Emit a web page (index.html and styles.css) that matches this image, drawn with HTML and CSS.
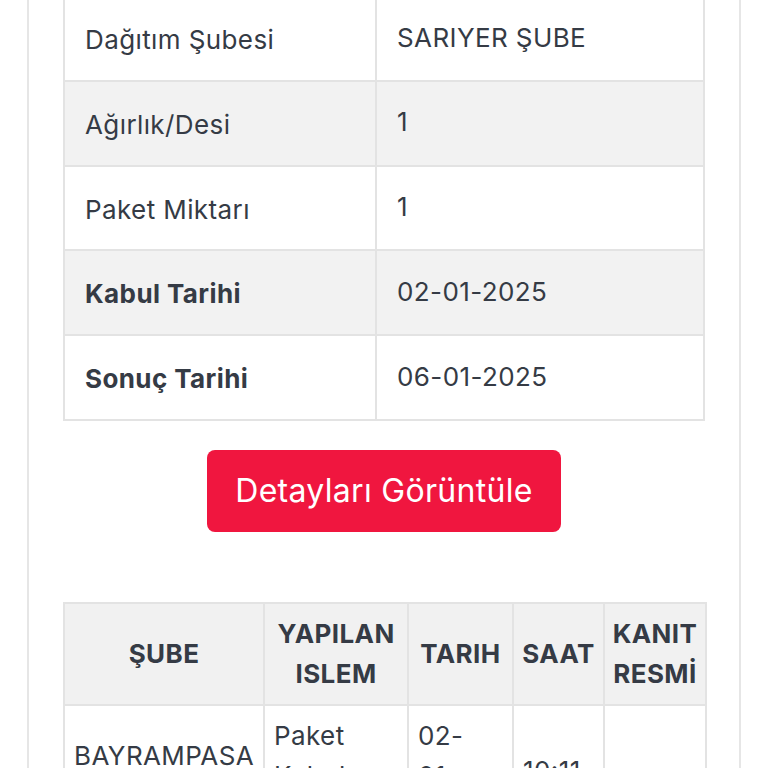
FILE: index.html
```html
<!DOCTYPE html>
<html lang="tr">
<head>
<meta charset="utf-8">
<title>Kargo Takip</title>
<link rel="stylesheet" href="styles.css">
</head>
<body>
<div class="card">
  <table class="info">
    <colgroup><col class="c-label"><col class="c-value"></colgroup>
    <tbody>
      <tr><td class="label">Dağıtım Şubesi</td><td class="value">SARIYER ŞUBE</td></tr>
      <tr class="alt"><td class="label">Ağırlık/Desi</td><td class="value">1</td></tr>
      <tr><td class="label">Paket Miktarı</td><td class="value">1</td></tr>
      <tr class="alt"><th class="label">Kabul Tarihi</th><td class="value">02-01-2025</td></tr>
      <tr><th class="label">Sonuç Tarihi</th><td class="value">06-01-2025</td></tr>
    </tbody>
  </table>

  <div class="actions">
    <button class="btn-detail" type="button">Detayları Görüntüle</button>
  </div>

  <table class="moves">
    <colgroup>
      <col class="m1"><col class="m2"><col class="m3"><col class="m4"><col class="m5">
    </colgroup>
    <thead>
      <tr>
        <th>ŞUBE</th>
        <th>YAPILAN ISLEM</th>
        <th>TARIH</th>
        <th>SAAT</th>
        <th>KANIT RESMİ</th>
      </tr>
    </thead>
    <tbody>
      <tr>
        <td>BAYRAMPASA AKTARMA</td>
        <td>Paket Kabul Edildi</td>
        <td>02-01-2025</td>
        <td class="time">10:11</td>
        <td></td>
      </tr>
    </tbody>
  </table>
</div>
</body>
</html>
```

FILE: styles.css
```css
html, body {
  margin: 0;
  padding: 0;
  background: #ffffff;
  overflow: hidden;
}

body {
  font-family: Inter, "Open Sans", "Liberation Sans", sans-serif;
  color: #353b45;
  font-size: 26px;
  letter-spacing: 0.4px;
}

.card {
  margin: -5px 27px 0 27px;
  border-left: 2px solid #e6e6e6;
  border-right: 2px solid #e6e6e6;
  padding: 0 34px 40px 34px;
  min-height: 900px;
}

table {
  width: 100%;
  border-collapse: collapse;
  table-layout: fixed;
}

.info td, .info th {
  border: 2px solid #e3e3e3;
  line-height: 36px;
  padding: 25px 20px 21.8px 20px;
  text-align: left;
  vertical-align: middle;
}

.info .c-label { width: 312px; }

.info th {
  font-weight: 700;
}

.info .value {
  padding-top: 22.6px;
  padding-bottom: 24.2px;
}

.info tr.alt td, .info tr.alt th {
  background: #f2f2f2;
}

.actions {
  display: flex;
  justify-content: center;
  padding: 29px 0 70px 0;
}

.btn-detail {
  background: #f0163f;
  color: #ffffff;
  border: none;
  border-radius: 8px;
  font-family: inherit;
  font-size: 32px;
  letter-spacing: 0.3px;
  line-height: 40px;
  padding: 21px 20px;
  width: 354px;
}

.moves th, .moves td {
  border: 2px solid #e3e3e3;
  line-height: 40px;
  vertical-align: middle;
}

.moves th {
  background: #f1f1f1;
  font-weight: 700;
  text-align: center;
  padding: 10px 4px;
}

.moves td {
  padding: 10px 9px;
  text-align: left;
}

.moves td.time {
  padding-bottom: 20px;
}

.moves .m1 { width: 200px; }
.moves .m2 { width: 144px; }
.moves .m3 { width: 105px; }
.moves .m4 { width: 91px; }
.moves .m5 { width: 102px; }
```
